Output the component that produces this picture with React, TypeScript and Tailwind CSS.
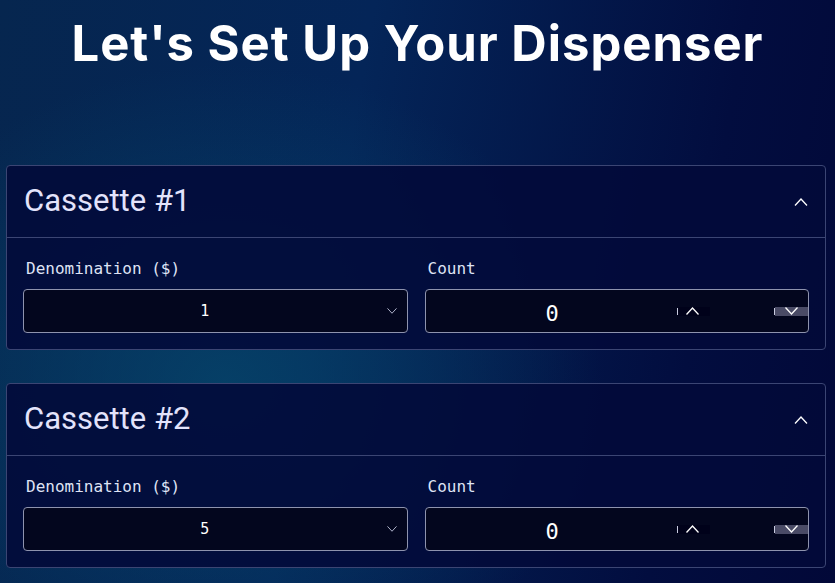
import { useState } from 'react'

const mono = 'font-["DejaVu_Sans_Mono","Liberation_Mono",monospace]'

const Chevron = ({ up, className }: { up?: boolean; className?: string }) => (
  <svg viewBox="0 0 14 8" className={className} fill="none" stroke="currentColor" strokeWidth={1.3}>
    <polyline points={up ? '1,7.5 7,1 13,7.5' : '1,0.5 7,7 13,0.5'} />
  </svg>
)

const Cassette = ({ index, denom }: { index: number; denom: string }) => {
  const [open, setOpen] = useState(true)
  return (
    <div className="rounded-[4px] border border-[#3b4573] bg-[#020a3a]/90">
      <button
        className="flex h-[71px] w-full items-center justify-between px-[17px] text-left"
        onClick={() => setOpen(!open)}
      >
        <span className="font-['Roboto',sans-serif] text-[31px] text-[#e3e3fb]">Cassette #{index}</span>
        <Chevron up={open} className="h-[8px] w-[14px] text-white" />
      </button>
      {open && (
        <div className="grid grid-cols-2 gap-[17px] border-t border-[#3b4573] px-[16px] pb-[16px] pt-[21px]">
          <div>
            <p className={`${mono} mb-[10px] pl-[3px] text-[16px] leading-[20px] text-[#dfe3f5]`}>Denomination ($)</p>
            <div className="flex h-[44px] items-center rounded-[4px] border border-[#8e93ae] bg-[#03061e]">
              <span className={`${mono} flex-1 text-center text-[15px] text-white`}>{denom}</span>
              <Chevron className="mr-[9px] h-[6px] w-[12px] text-[#b4b8d0]" />
            </div>
          </div>
          <div>
            <p className={`${mono} mb-[10px] pl-[3px] text-[16px] leading-[20px] text-[#dfe3f5]`}>Count</p>
            <div className="flex h-[44px] items-center rounded-[4px] border border-[#8e93ae] bg-[#03061e]">
              <span className={`${mono} w-[251px] pl-[2px] pt-[4px] text-center text-[22px] text-white`}>0</span>
              <div className="flex h-[9px] items-center">
                <span className="h-[7px] w-[1px] bg-[#c9cbe0]" />
                <span className="flex h-[9px] w-[32px] items-center justify-center bg-[#00011a]">
                  <Chevron up className="mr-[3px] h-[8px] w-[15px] text-white" />
                </span>
              </div>
              <div className="ml-auto flex h-[9px] items-center">
                <span className="h-[7px] w-[1px] bg-[#c9cbe0]" />
                <span className="flex h-[9px] w-[33px] items-center justify-center bg-[#4a4b66]">
                  <Chevron className="h-[8px] w-[15px] text-white" />
                </span>
              </div>
            </div>
          </div>
        </div>
      )}
    </div>
  )
}

export default function App() {
  return (
    <div className="h-[583px] w-full overflow-hidden bg-[radial-gradient(ellipse_45%_55%_at_27%_66%,rgba(6,72,108,0.75),transparent),linear-gradient(100deg,#06264f_0%,#042558_40%,#020d3f_80%,#020838_100%)]">
      <h1 className="pt-[14px] text-center font-['Inter',sans-serif] text-[49px] font-bold leading-[60px] tracking-[1px] text-white">
        Let's Set Up Your Dispenser
      </h1>
      <div className="ml-[6px] mt-[91px] flex w-[820px] flex-col gap-[33px]">
        <Cassette index={1} denom="1" />
        <Cassette index={2} denom="5" />
      </div>
    </div>
  )
}
